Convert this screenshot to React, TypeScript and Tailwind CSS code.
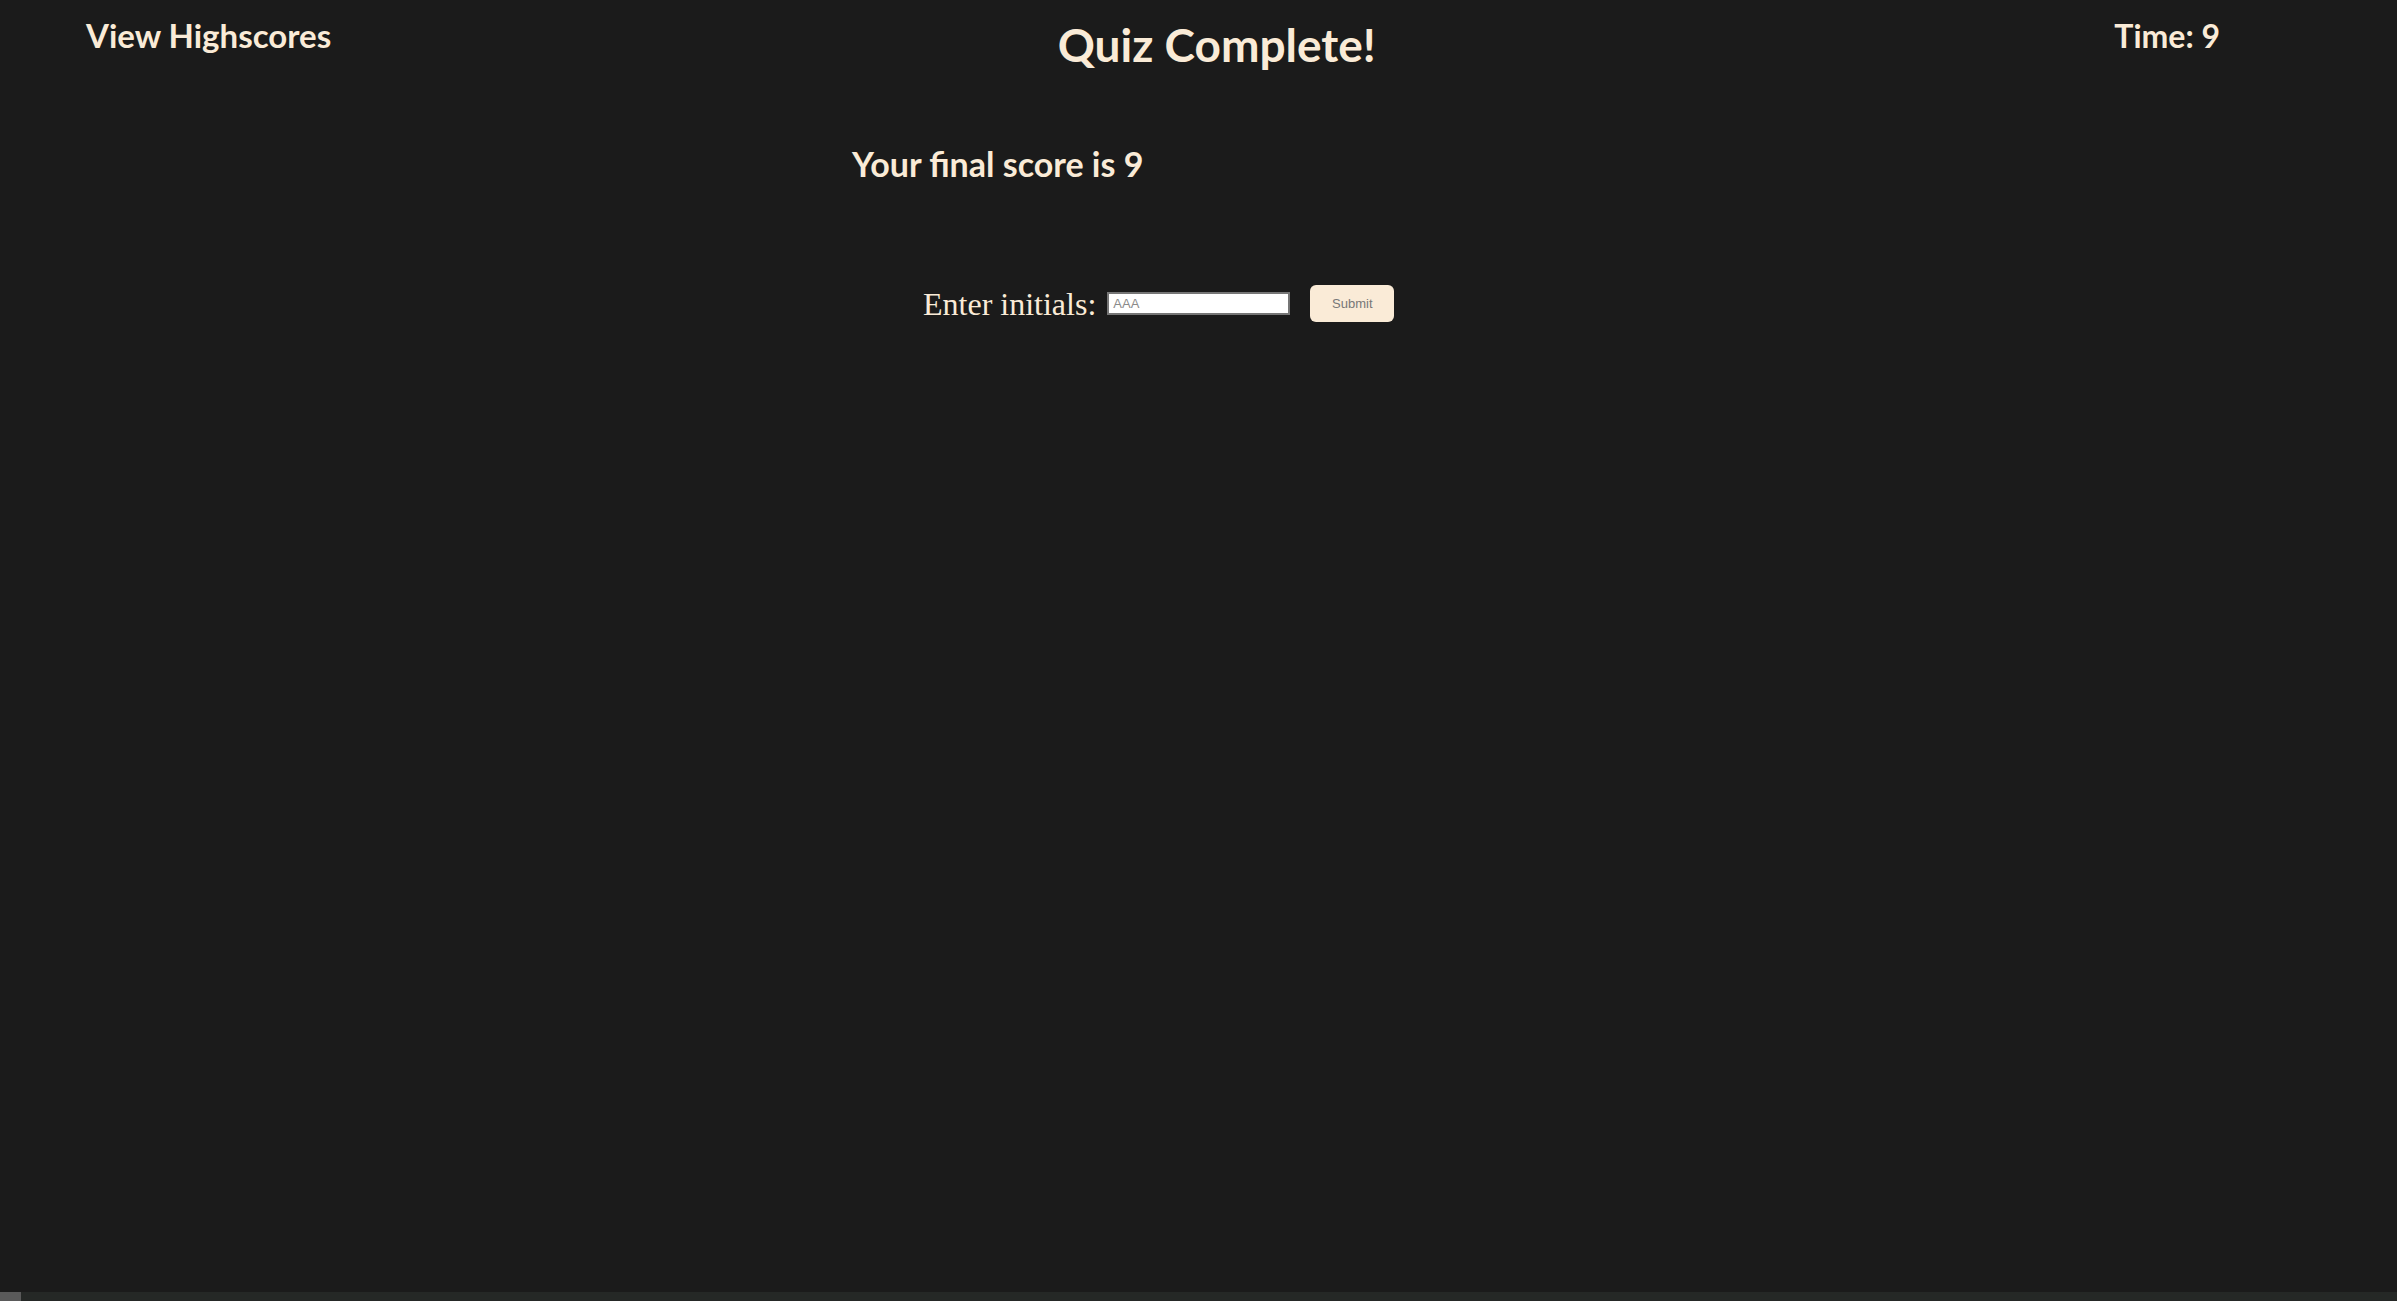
export default function App() {
  return (
    <div className="min-h-screen flex flex-col bg-[#1b1b1b] text-[#faebd7] font-['Lato',_sans-serif]">
      <header className="flex justify-between items-start pl-[86px] pr-[177px]">
        <div className="text-[33px] font-bold leading-none pt-[19px]">View Highscores</div>
        <h1 className="text-[46px] font-bold leading-none pt-[22px] mr-[12px]">Quiz Complete!</h1>
        <div className="text-[32px] font-bold leading-none pt-[20px]">Time: 9</div>
      </header>
      <main className="flex-1">
        <h2 className="text-[34px] font-bold leading-none pl-[852px] pt-[79px]">Your final score is 9</h2>
        <form className="flex items-center pl-[923px] pt-[104px]" onSubmit={(e) => e.preventDefault()}>
          <label className="font-['Liberation_Serif',_serif] text-[32px] leading-none">Enter initials:</label>
          <input
            type="text"
            placeholder="AAA"
            className="ml-[11px] w-[183px] h-[23px] bg-white border-2 border-[#767676] px-[4px] text-[13px] text-black font-['Liberation_Sans',_sans-serif] placeholder:text-[#8a8a8a] outline-none"
          />
          <button
            type="submit"
            className="ml-[20px] w-[84px] h-[37px] rounded-[6px] bg-[#faebd7] text-[#777] text-[13px] font-['Liberation_Sans',_sans-serif]"
          >
            Submit
          </button>
        </form>
      </main>
      <div className="h-[9px] flex bg-[#252826]">
        <div className="w-[21px] bg-[#5a5a5a]"></div>
      </div>
    </div>
  )
}
